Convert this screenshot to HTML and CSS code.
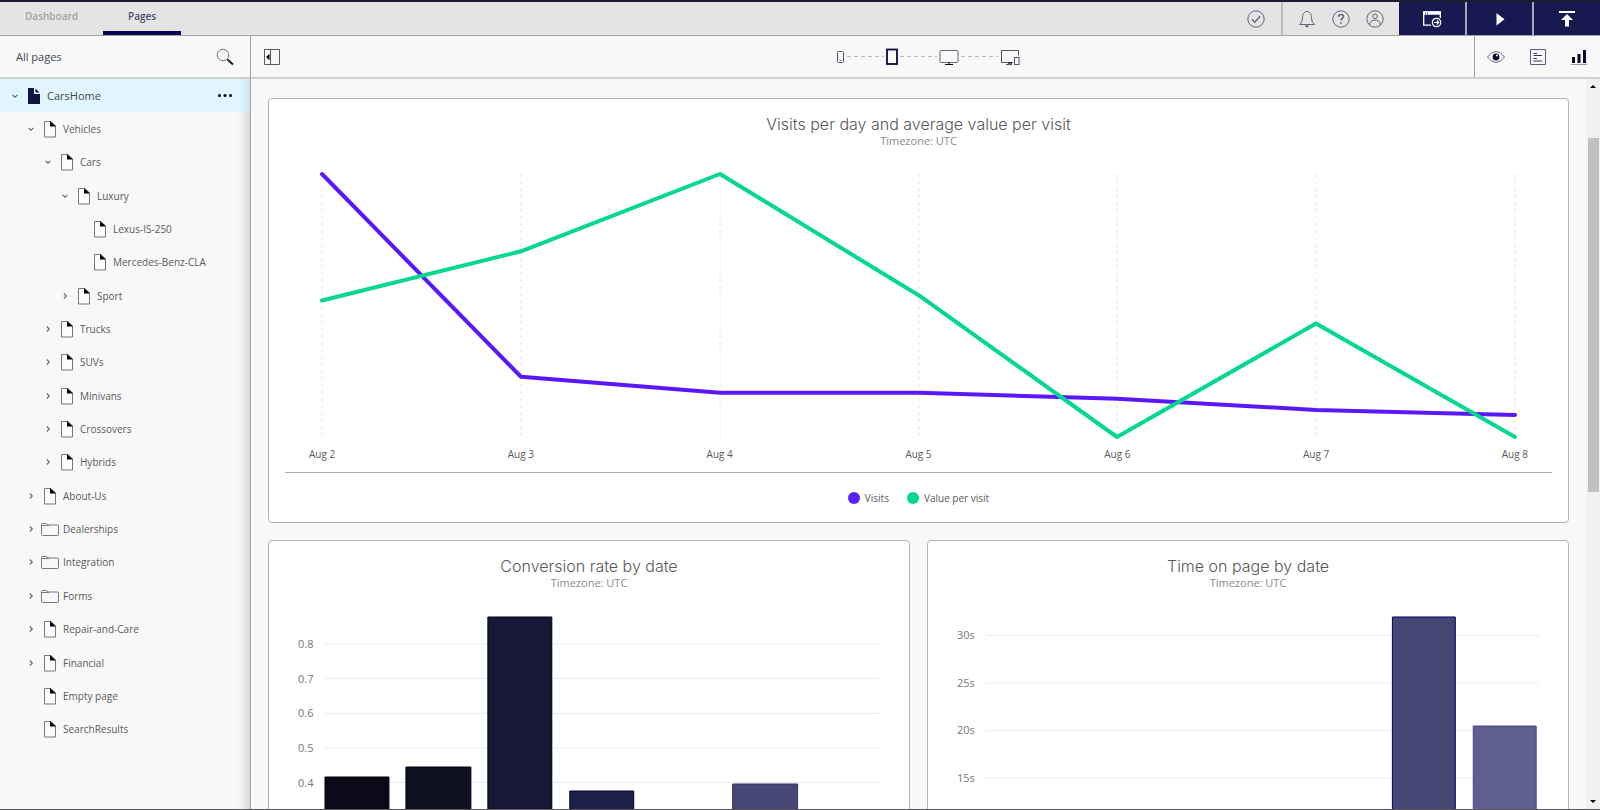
FILE: index.html
```html
<!DOCTYPE html>
<html lang="en">
<head>
<meta charset="utf-8">
<title>Pages</title>
<link rel="stylesheet" href="styles.css">
</head>
<body>
<svg class="defs" aria-hidden="true">
  <symbol id="page" viewBox="0 0 18 18"><path d="M3.500 1.500h6.500l4.500 4.500v11h-11z" fill="#fcfcfc" stroke="#77777c"/><path d="M9 1l6 5.500H9z" fill="#000"/></symbol>
  <symbol id="page-solid" viewBox="0 0 18 18"><path d="M3 1h6v6h6v10H3z" fill="#11143f"/><path d="M10.500 1.500l4 4h-4z" fill="#11143f"/></symbol>
  <symbol id="folder" viewBox="0 0 18 18"><path d="M.5 14V4.500q0-1 1-1h4l1.500 1.500h9.500q1 0 1 1v8.500q0 1-1 1h-15q-1 0-1-1zM1 5.500h7" fill="none" stroke="#77777c"/></symbol>
  <symbol id="down" viewBox="0 0 8 8"><path d="M1.500 2.800l2.500 2.400 2.500-2.400" fill="none" stroke="#666" stroke-width="1.100"/></symbol>
  <symbol id="right" viewBox="0 0 8 8"><path d="M2.800 1.500l2.500 2.500-2.500 2.500" fill="none" stroke="#666" stroke-width="1.100"/></symbol>
</svg>
<div class="app">
  <header class="topbar">
    <nav class="tabs">
      <a class="tab" href="#">Dashboard</a>
      <a class="tab active" href="#">Pages</a>
    </nav>
    <div class="status">
      <button class="icon" aria-label="Status"><svg width="18" height="18" viewBox="0 0 18 18"><circle cx="9" cy="9" r="8.200"/><path d="M5 9.300l2.800 2.900 5.300-6" stroke-width="1.300"/></svg></button>
    </div>
    <div class="account">
      <button class="icon" aria-label="Notifications"><svg width="18" height="18" viewBox="0 0 18 18"><path d="M1.500 14.500q3-2 3-6.500c0-4 1.800-6.500 4.500-6.500s4.500 2.500 4.500 6.500q0 4.500 3 6.500z"/><path d="M7 15.500h4q-.5 1.800-2 1.800t-2-1.800z" fill="#44485f" stroke="none"/></svg></button>
      <button class="icon" aria-label="Help"><svg width="18" height="18" viewBox="0 0 18 18"><circle cx="9" cy="9" r="8.200"/><path d="M6.500 6.800q.2-2.200 2.500-2.200t2.500 2c0 1.800-2.500 1.700-2.500 4M9 12v1.700" stroke-width="1.500"/></svg></button>
      <button class="icon" aria-label="Account"><svg width="18" height="18" viewBox="0 0 18 18"><circle cx="9" cy="9" r="8.200"/><circle cx="9" cy="6.300" r="2.300"/><path d="M3.500 15q.5-5 5.500-5t5.500 5"/></svg></button>
    </div>
    <div class="actions">
      <button aria-label="Open site"><svg width="20" height="18" viewBox="0 0 20 18"><path d="M9 15.200H1.700V2h16.600v6" fill="none" stroke="#fff" stroke-width="1.300"/><path d="M1.500 1.500h17v3.200h-17z" fill="#fff"/><path d="M3 3.200h1m1 0h1" stroke="#171a50"/><circle cx="14.500" cy="12.500" r="4.200" fill="#171a50" stroke="#fff" stroke-width="1.200"/><path d="M11.800 12.500h5m-2-2l2 2-2 2" fill="none" stroke="#fff" stroke-width="1.200"/></svg></button>
      <button aria-label="Preview"><svg width="18" height="18" viewBox="0 0 18 18"><path d="M5.500 3l8 6.200-8 6.200z" fill="#fff"/></svg></button>
      <button aria-label="Publish"><svg width="18" height="18" viewBox="0 0 18 18"><path d="M1 1h16v2H1zM9 4l6 6h-4v6.500H7V10H3z" fill="#fff"/></svg></button>
    </div>
  </header>
  <div class="body">
    <aside class="sidebar">
      <div class="side-head">
        <span>All pages</span>
        <button class="icon" aria-label="Search"><svg width="18" height="18" viewBox="0 0 18 18"><circle cx="7" cy="7" r="5.800" stroke="#77777e"/><path d="M11.500 11.500l5.500 5" stroke="#111" stroke-width="1.800"/></svg></button>
      </div>
      <ul class="tree">
        <li class="row l0 selected"><svg class="chev"><use href="#down"/></svg><svg class="ico"><use href="#page-solid"/></svg><a href="#">CarsHome</a><button class="more" aria-label="More"><svg width="16" height="6" viewBox="0 0 16 6"><circle cx="2.500" cy="2.500" r="1.500"/><circle cx="8" cy="2.500" r="1.500"/><circle cx="13.500" cy="2.500" r="1.500"/></svg></button></li>
        <li class="row l1"><svg class="chev"><use href="#down"/></svg><svg class="ico"><use href="#page"/></svg><a href="#">Vehicles</a></li>
        <li class="row l2"><svg class="chev"><use href="#down"/></svg><svg class="ico"><use href="#page"/></svg><a href="#">Cars</a></li>
        <li class="row l3"><svg class="chev"><use href="#down"/></svg><svg class="ico"><use href="#page"/></svg><a href="#">Luxury</a></li>
        <li class="row l4"><svg class="chev"></svg><svg class="ico"><use href="#page"/></svg><a href="#">Lexus-IS-250</a></li>
        <li class="row l4"><svg class="chev"></svg><svg class="ico"><use href="#page"/></svg><a href="#">Mercedes-Benz-CLA</a></li>
        <li class="row l3"><svg class="chev"><use href="#right"/></svg><svg class="ico"><use href="#page"/></svg><a href="#">Sport</a></li>
        <li class="row l2"><svg class="chev"><use href="#right"/></svg><svg class="ico"><use href="#page"/></svg><a href="#">Trucks</a></li>
        <li class="row l2"><svg class="chev"><use href="#right"/></svg><svg class="ico"><use href="#page"/></svg><a href="#">SUVs</a></li>
        <li class="row l2"><svg class="chev"><use href="#right"/></svg><svg class="ico"><use href="#page"/></svg><a href="#">Minivans</a></li>
        <li class="row l2"><svg class="chev"><use href="#right"/></svg><svg class="ico"><use href="#page"/></svg><a href="#">Crossovers</a></li>
        <li class="row l2"><svg class="chev"><use href="#right"/></svg><svg class="ico"><use href="#page"/></svg><a href="#">Hybrids</a></li>
        <li class="row l1"><svg class="chev"><use href="#right"/></svg><svg class="ico"><use href="#page"/></svg><a href="#">About-Us</a></li>
        <li class="row l1"><svg class="chev"><use href="#right"/></svg><svg class="ico"><use href="#folder"/></svg><a href="#">Dealerships</a></li>
        <li class="row l1"><svg class="chev"><use href="#right"/></svg><svg class="ico"><use href="#folder"/></svg><a href="#">Integration</a></li>
        <li class="row l1"><svg class="chev"><use href="#right"/></svg><svg class="ico"><use href="#folder"/></svg><a href="#">Forms</a></li>
        <li class="row l1"><svg class="chev"><use href="#right"/></svg><svg class="ico"><use href="#page"/></svg><a href="#">Repair-and-Care</a></li>
        <li class="row l1"><svg class="chev"><use href="#right"/></svg><svg class="ico"><use href="#page"/></svg><a href="#">Financial</a></li>
        <li class="row l1"><svg class="chev"></svg><svg class="ico"><use href="#page"/></svg><a href="#">Empty page</a></li>
        <li class="row l1"><svg class="chev"></svg><svg class="ico"><use href="#page"/></svg><a href="#">SearchResults</a></li>
      </ul>
    </aside>
    <main class="main">
      <div class="toolbar">
        <div class="tool-left">
          <button class="icon" aria-label="Collapse sidebar"><svg width="16" height="16" viewBox="0 0 16 16"><path d="M.5.500h15v15H.500zM6.500.500v15" stroke="#5a5a66"/><path d="M5.500 4.800v6.400L2 8z" fill="#000" stroke="none"/></svg></button>
        </div>
        <div class="devices">
          <button class="icon" aria-label="Phone"><svg width="8" height="16" viewBox="0 0 8 16"><rect x=".5" y="2.500" width="6" height="11" rx="1" stroke="#55556a"/><path d="M2.500 11.500h2"/></svg></button>
          <span class="dash"></span>
          <button class="icon" aria-label="Tablet"><svg width="12" height="18" viewBox="0 0 12 18"><rect x="1" y="1.500" width="10" height="14.500" stroke="#0a0c30" stroke-width="1.800"/></svg></button>
          <span class="dash"></span>
          <button class="icon" aria-label="Desktop"><svg width="20" height="18" viewBox="0 0 20 18"><rect x="1" y="2.500" width="18" height="12" rx="1" stroke="#66667a"/><path d="M6 16.500h8M9 15h2" stroke="#000" stroke-width="1.200"/></svg></button>
          <span class="dash"></span>
          <button class="icon" aria-label="All devices"><svg width="20" height="18" viewBox="0 0 20 18"><path d="M13 14.500H1.500v-12h17v5M6 16.500h6" stroke="#55556a"/><path d="M8 15h4" stroke="#000" stroke-width="1.200"/><rect x="14.500" y="9.500" width="4.500" height="7" stroke="#55556a"/></svg></button>
        </div>
        <div class="tool-right">
          <div class="views">
            <button class="icon" aria-label="Visibility"><svg width="18" height="16" viewBox="1 0 18 16"><path d="M1.500 8q4-5.500 8.500-5.500T18.500 8q-4 5.500-8.500 5.500T1.500 8z"/><circle cx="10" cy="8" r="3.400" fill="#080a28" stroke="none"/><circle cx="11" cy="6.600" r="1" fill="#fff" stroke="none"/></svg></button>
            <button class="icon" aria-label="Content"><svg width="16" height="16" viewBox="0 0 16 16"><path d="M.5.500h15v15H.500z" stroke="#66587a"/><path d="M3.500 4.500H7m-3.500 2H12m-8.500 3H7m-3.500 2.500H12" stroke="#333755"/></svg></button>
            <button class="icon" aria-label="Analytics"><svg width="16" height="16" viewBox="0 0 16 16"><path d="M1 8h3v6H1zm5.500-3h3v9h-3zM12 1h3v13h-3z" fill="#080a28" stroke="none"/><path d="M0 15.500h16" stroke="#99a"/></svg></button>
          </div>
        </div>
      </div>
      <div class="content">
        <div class="cards">
          <section class="card wide">
            <h2>Visits per day and average value per visit</h2>
            <p class="sub">Timezone: UTC</p>
            <svg class="lines" viewBox="0 0 1193 262" preserveAspectRatio="none">
              <path class="guides" d="M0 0V262M199 0V262M398 0V262M597 0V262M795 0V262M994 0V262M1193 0V262"/>
              <polyline class="visits" points="0,0 199,202 398,218 597,218 795,224 994,235 1193,240"/>
              <polyline class="value" points="0,126 199,77 398,0 597,121 795,262 994,149 1193,262"/>
            </svg>
            <div class="days"><span>Aug 2</span><span>Aug 3</span><span>Aug 4</span><span>Aug 5</span><span>Aug 6</span><span>Aug 7</span><span>Aug 8</span></div>
            <div class="legend"><span class="key visits-key">Visits</span><span class="key value-key">Value per visit</span></div>
          </section>
          <section class="card">
            <h2>Conversion rate by date</h2>
            <p class="sub">Timezone: UTC</p>
            <div class="plot">
              <div class="scale rate"><span>0.8</span><span>0.7</span><span>0.6</span><span>0.5</span><span>0.4</span><span>0.3</span><span>0.2</span><span>0.1</span><span>0.0</span></div>
              <svg class="bars" viewBox="0 0 556 305" preserveAspectRatio="none">
                <path class="grid" d="M0 28H556M0 62.600H556M0 97.300H556M0 131.900H556M0 166.500H556M0 201.100H556M0 235.800H556M0 270.400H556M0 305H556"/>
                <rect x="1" y="161" width="64" height="144" fill="#0a0a18" stroke="#000008"/>
                <rect x="82" y="151" width="65" height="154" fill="#101023" stroke="#000014"/>
                <rect x="164" y="1" width="64" height="304" fill="#171738" stroke="#000018"/>
                <rect x="246" y="175" width="64" height="130" fill="#1e1e4b" stroke="#000038"/>
                <rect x="327" y="240" width="65" height="65" fill="#2d2d60" stroke="#202058"/>
                <rect x="409" y="168" width="65" height="137" fill="#474776" stroke="#32326a"/>
                <rect x="491" y="236" width="64" height="69" fill="#5f5f90" stroke="#484884"/>
              </svg>
            </div>
          </section>
          <section class="card">
            <h2>Time on page by date</h2>
            <p class="sub">Timezone: UTC</p>
            <div class="plot">
              <div class="scale time"><span>30s</span><span>25s</span><span>20s</span><span>15s</span><span>10s</span><span>5s</span><span>0s</span></div>
              <svg class="bars" viewBox="0 0 554 305" preserveAspectRatio="none">
                <path class="grid" d="M0 19.500H554M0 67H554M0 114.700H554M0 162.300H554M0 209.800H554M0 257.400H554M0 305H554"/>
                <rect x="4" y="220" width="63" height="85" fill="#0a0a18" stroke="#000008"/>
                <rect x="85" y="240" width="63" height="65" fill="#101023" stroke="#000014"/>
                <rect x="165" y="210" width="63" height="95" fill="#171738" stroke="#000018"/>
                <rect x="246" y="250" width="63" height="55" fill="#1e1e4b" stroke="#000038"/>
                <rect x="326" y="230" width="63" height="75" fill="#2d2d60" stroke="#202058"/>
                <rect x="407" y="1" width="63" height="304" fill="#474776" stroke="#000060"/>
                <rect x="488" y="110" width="63" height="195" fill="#5f5f90" stroke="#484884"/>
              </svg>
            </div>
          </section>
        </div>
        <div class="scrollbar" aria-hidden="true">
          <svg width="14" height="16" viewBox="0 0 14 16"><path d="M4 9l3-3 3 3z"/></svg>
          <div class="track"><div class="thumb"></div></div>
          <svg width="14" height="16" viewBox="0 0 14 16"><path d="M4 7l3 3 3-3z"/></svg>
        </div>
      </div>
    </main>
  </div>
</div>
</body>
</html>
```

FILE: styles.css
```css
* { box-sizing: border-box; }
body {
  margin: 0;
  font-family: "Open Sans", "Noto Sans", sans-serif;
  font-size: 11px;
  line-height: 16px;
  color: #5a5a5a;
}
a { color: inherit; text-decoration: none; }
button { border: 0; padding: 0; background: none; font: inherit; color: inherit; display: flex; align-items: center; justify-content: center; }
svg { display: block; flex: none; }
.defs { position: absolute; width: 0; height: 0; }
.icon svg { fill: none; stroke: #62667a; }

.app {
  height: 100vh;
  display: flex;
  flex-direction: column;
  border-top: 2px solid #1b1b30;
  border-bottom: 1px solid #55555a;
  background: #f8f8f8;
  overflow: hidden;
}

/* Top bar */
.topbar { display: flex; height: 34px; flex: none; background: #e4e4e4; border-bottom: 1px solid #a4a4a4; }
.tabs { display: flex; flex: 1; }
.tab { padding: 6px 25px 0; font-size: 10px; font-weight: 600; color: #a2a2a2; border-bottom: 4px solid transparent; }
.tab.active { color: #4b4f6b; border-color: #04094f; }
.status { display: flex; padding: 0 16px; border-right: 2px solid #bcbcbc; }
.account { display: flex; gap: 16px; padding: 0 15px; }
.actions { display: flex; gap: 2px; width: 201px; background: #a8a8b4; }
.actions button { flex: 1; background: #171a50; }

.body { display: flex; flex: 1; min-height: 0; }

/* Page tree */
.sidebar {
  display: flex;
  flex-direction: column;
  width: 251px;
  flex: none;
  border-right: 1px solid #a2a2a2;
}
.side-head {
  display: flex;
  justify-content: space-between;
  align-items: center;
  height: 43px;
  padding: 0 16px;
  border-bottom: 2px solid #d0d0d0;
  color: #44465a;
  flex: none;
}
.tree {
  flex: 1;
  display: flex;
  flex-direction: column;
  margin: 0;
  padding: 0 0 63px;
  list-style: none;
  font-size: 10px;
  box-shadow: inset -12px 0 10px -8px rgba(0, 0, 0, .16);
}
.row { flex: 1; display: flex; align-items: center; padding-right: 17px; }
.chev { width: 8px; height: 8px; margin-right: 6px; }
.ico { width: 18px; height: 18px; margin-right: 4px; }
.l0 { padding-left: 11px; }
.l1 { padding-left: 27px; }
.l2 { padding-left: 44px; }
.l3 { padding-left: 61px; }
.l4 { padding-left: 77px; }
.selected { font-size: 11px; background: rgba(200, 242, 255, .5); color: #44465a; }
.more { margin-left: auto; }

/* Toolbar */
.main { display: flex; flex-direction: column; flex: 1; min-width: 0; }
.toolbar {
  display: grid;
  grid-template-columns: 1fr auto 1fr;
  height: 43px;
  flex: none;
  border-bottom: 2px solid #d0d0d0;
}
.tool-left { display: flex; padding-left: 13px; }
.devices { display: flex; align-items: center; gap: 2px; padding-left: 6px; }
.dash { width: 37px; height: 1px; background: repeating-linear-gradient(90deg, #bbb 0 4px, transparent 4px 7px); }
.tool-right { display: flex; justify-content: flex-end; }
.views { display: flex; gap: 25px; padding: 0 13px 0 12px; border-left: 1px solid #a4a4a4; }

/* Cards */
.content { display: flex; flex: 1; min-height: 0; }
.cards {
  flex: 1;
  display: grid;
  grid-template-columns: repeat(2, minmax(0, 1fr));
  align-content: start;
  gap: 17px;
  padding: 19px 17px 17px;
  overflow-y: auto;
  scrollbar-width: none;
}
.card { padding: 16px; background: #fff; border: 1px solid #b4b4b4; border-radius: 4px; }
.wide { grid-column: 1 / -1; }
h2 {
  margin: 0;
  font-family: Inter, "Open Sans", sans-serif;
  font-size: 16px;
  font-weight: 300;
  line-height: 18px;
  text-align: center;
  color: #585858;
}
.sub { margin: 0; text-align: center; color: #8a8a8a; }
.lines { width: calc(100% - 74px); height: 263px; margin: 25px 37px 9px; overflow: visible; }
.lines * { fill: none; vector-effect: non-scaling-stroke; }
.guides { stroke: #e4e4e4; stroke-dasharray: 3 4; }
.lines polyline { stroke-width: 4; stroke-linejoin: round; stroke-linecap: round; }
.visits { stroke: #5a18fa; }
.value { stroke: #04d792; }
.days { display: flex; justify-content: space-between; padding: 0 24px 10px; border-bottom: 1px solid #acacac; font-size: 10px; }
.legend { display: flex; justify-content: center; gap: 18px; padding-top: 17px; font-size: 10px; }
.key { display: flex; align-items: center; gap: 5px; }
.key::before { content: ""; width: 12px; height: 12px; border-radius: 50%; }
.visits-key::before { background: #5a22fa; }
.value-key::before { background: #04d792; }

.plot { display: flex; gap: 11px; padding: 25px 13px 40px; }
.scale { display: flex; flex-direction: column; justify-content: space-between; color: #777; margin-bottom: -8px; }
.rate { padding-top: 20px; }
.time { padding-top: 11px; }
.bars { flex: 1; width: 0; min-width: 0; height: 305px; overflow: visible; }
.bars * { vector-effect: non-scaling-stroke; }
.grid { fill: none; stroke: #ececec; }

/* Scroll bar */
.scrollbar { display: flex; flex-direction: column; width: 14px; background: #f0f0f0; }
.track { flex: 1; padding: 43px 1px 0 2px; }
.thumb { height: 54%; background: #c1c1c1; }
```
